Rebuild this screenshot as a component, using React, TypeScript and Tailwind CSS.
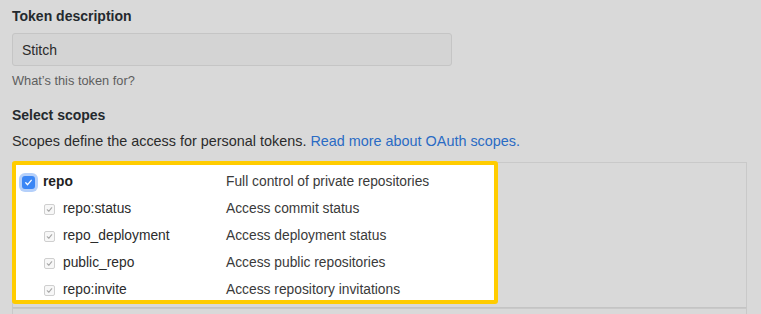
const scopes = [
  { name: "repo:status", desc: "Access commit status" },
  { name: "repo_deployment", desc: "Access deployment status" },
  { name: "public_repo", desc: "Access public repositories" },
  { name: "repo:invite", desc: "Access repository invitations" },
];

function Check({ className }: { className: string }) {
  return (
    <svg viewBox="0 0 12 12" className={className} fill="none">
      <path d="M3 6.3 5 8.4 9 3.6" stroke="currentColor" strokeWidth="1.4" strokeLinecap="round" strokeLinejoin="round" />
    </svg>
  );
}

export default function App() {
  return (
    <div className="w-[761px] h-[314px] overflow-hidden bg-[#d9d9d9] px-3 pt-[6px] text-[#24292e] font-['Liberation_Sans',Arial,sans-serif]">
      <p className="text-[14px] font-bold leading-5">Token description</p>
      <div className="mt-[7px] w-[440px] h-[33px] rounded-[3px] border border-[#c5c5c5] bg-[#d4d4d4] px-[9px] pt-[2px] flex items-center text-[14px] text-[#2a2a2a]">
        Stitch
      </div>
      <p className="mt-[7px] text-[12.8px] leading-4 text-[#5e5e5e]">What’s this token for?</p>

      <p className="mt-[16px] text-[14px] font-bold leading-5">Select scopes</p>
      <p className="mt-[6px] text-[14.4px] leading-5 text-[#2b2b2b]">
        Scopes define the access for personal tokens.{" "}
        <a href="#" className="text-[#2a6bc4]">Read more about OAuth scopes.</a>
      </p>

      <div className="mt-[11px] w-[735px] h-[146px] border border-[#c9c9c9] border-b-[#c4c4c4]">
        <div className="-mt-[2px] -ml-px w-[486px] h-[143px] rounded-[3px] border-4 border-[#ffcc00] bg-white overflow-hidden pt-[4px] text-[13.8px]">
          <div className="h-[27px] grid grid-cols-[210px_1fr] items-center">
            <div className="flex items-center pl-[6px]">
              <span className="w-[13px] h-[13px] rounded-[3px] bg-[#3a86f5] shadow-[0_0_0_3px_rgba(90,150,245,0.45)] flex items-center justify-center">
                <Check className="w-[11px] h-[11px] text-white" />
              </span>
              <span className="ml-[8px] font-bold text-[#1f1f1f]">repo</span>
            </div>
            <span className="text-[#3a3a3a]">Full control of private repositories</span>
          </div>
          {scopes.map((s) => (
            <div key={s.name} className="h-[27px] grid grid-cols-[210px_1fr] items-center">
              <div className="flex items-center pl-[28px]">
                <span className="w-[11px] h-[11px] rounded-[2px] border border-[#cfcfcf] bg-[#f7f7f7] flex items-center justify-center">
                  <Check className="w-[9px] h-[9px] text-[#a6a6a6]" />
                </span>
                <span className="ml-[8px] text-[#2b2b2b]">{s.name}</span>
              </div>
              <span className="text-[#3a3a3a]">{s.desc}</span>
            </div>
          ))}
        </div>
      </div>
      <div className="w-[735px] h-[10px] border-x border-t border-[#c9c9c9]" />
    </div>
  );
}
